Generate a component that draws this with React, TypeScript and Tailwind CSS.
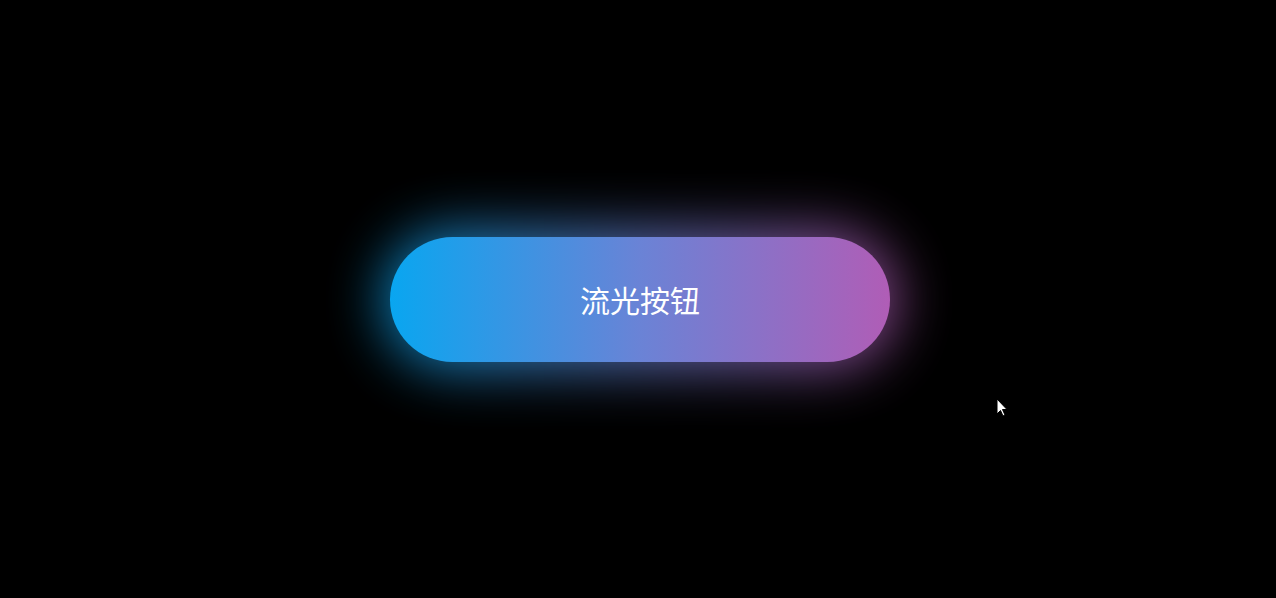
import React from "react";

export default function App() {
  return (
    <div className="relative flex h-[598px] w-full items-center justify-center overflow-hidden bg-black pl-[4px]">
      <div className="relative h-[125px] w-[500px]">
        <div className="absolute inset-[-6px] rounded-full bg-[linear-gradient(90deg,#06a8f2,#6b84d6,#b65ab4)] opacity-80 blur-[28px]" />
        <button
          className="relative flex h-full w-full items-center justify-center rounded-full bg-[linear-gradient(90deg,#09a6f0_0%,#6a83d6_50%,#b05db6_100%)] text-[30px] text-white"
          style={{ fontFamily: '"Noto Sans CJK SC", "Noto Sans", sans-serif' }}
        >
          <span className="leading-none">流光按钮</span>
        </button>
      </div>
      <svg
        className="absolute left-[996px] top-[398px]"
        width="12"
        height="19"
        viewBox="0 0 12 19"
      >
        <path
          d="M1 1 L1 16 L4.5 12.5 L7 18 L9 17 L6.5 11.5 L11 11.5 Z"
          fill="#fff"
          stroke="#000"
          strokeWidth="1"
        />
      </svg>
    </div>
  );
}
